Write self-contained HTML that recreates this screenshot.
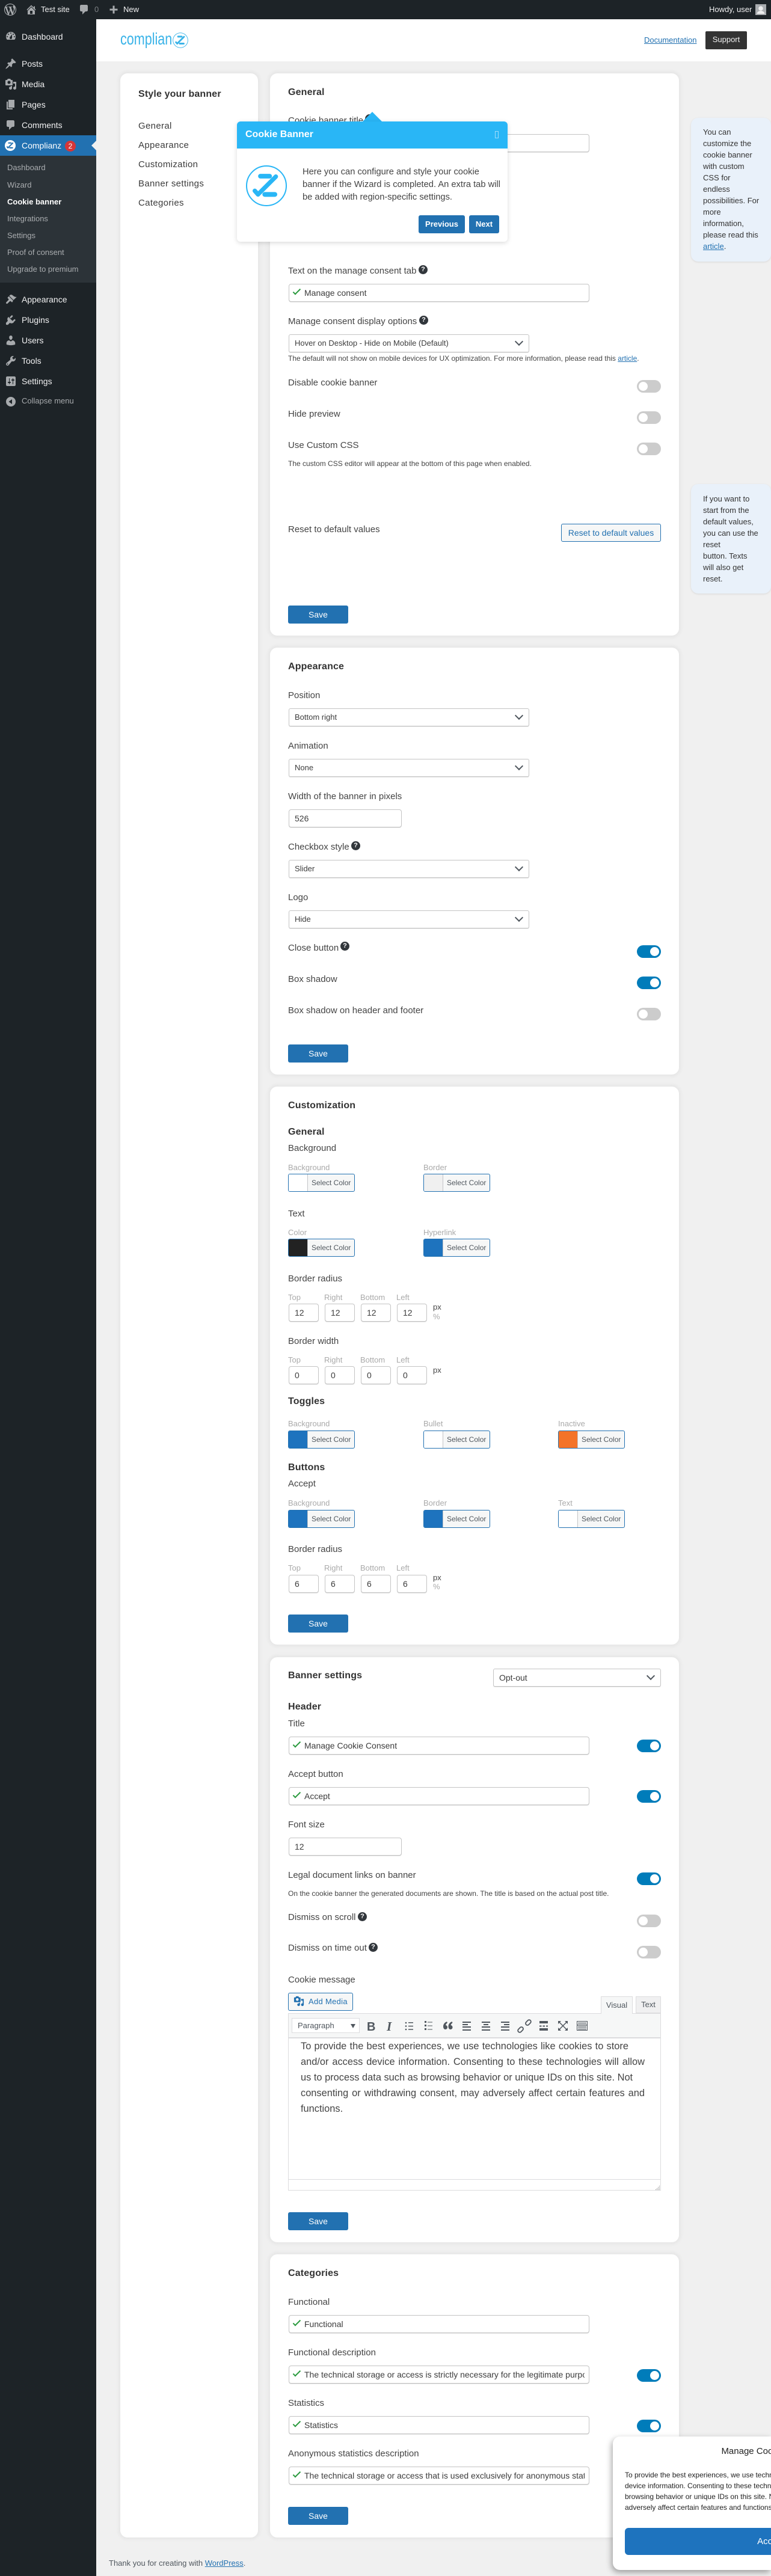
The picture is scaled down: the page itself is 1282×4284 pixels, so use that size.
<!DOCTYPE html>
<html lang="en"><head><meta charset="utf-8"><title>Cookie banner</title>
<style>
html,body{margin:0;padding:0;background:#f0f0f0}
body{position:relative;width:1282px;height:4284px;overflow:hidden;font-family:"Liberation Sans",sans-serif;color:#444}
a{color:#2271b1;text-decoration:underline}
.abs,.l,.s,.h,.c,.t,.sel,.n,.w,.tg,.cb,.save,.card,.m,.sm,.ic,.hp,.px{position:absolute}
#bar{position:absolute;left:0;top:0;width:1282px;height:32px;background:#1d2327}
#side{position:absolute;left:0;top:32px;width:160px;height:4252px;background:#1d2327}
#sub{position:absolute;left:0;top:259px;width:160px;height:211px;background:#2c3338}
#act{position:absolute;left:0;top:225px;width:160px;height:34px;background:#2271b1}
#head{position:absolute;left:160px;top:32px;width:1122px;height:70px;background:#fff}
.bt{position:absolute;font-size:13px;line-height:18px;color:#f0f0f1;top:7px;white-space:nowrap}
.m{left:36px;font-size:14px;line-height:18px;color:#f0f0f1;white-space:nowrap}
.sm{left:12px;font-size:13px;line-height:18px;color:#a9acaf;white-space:nowrap}
.ic{left:8px;width:20px;height:20px;fill:#a7aaad}
.card{background:#fff;border-radius:12px;box-shadow:0 0 5px 3px rgba(205,205,205,.28);left:449px;width:680px}
.l{left:479px;font-size:15px;line-height:18px;color:#444;white-space:nowrap}
.h{left:479px;margin-top:1px;font-size:16px;line-height:20px;font-weight:bold;color:#333;letter-spacing:.15px;white-space:nowrap}
.s{font-size:13px;line-height:16px;color:#aaa;white-space:nowrap}
.c{left:479px;font-size:12px;line-height:16px;color:#444;white-space:nowrap}
.t{left:480px;width:500px;height:30px;box-sizing:border-box;border:1px solid #c4c4c4;border-radius:4px;background:#fff;font-size:14px;line-height:28px;padding-left:25px;color:#3c3c3c;white-space:nowrap;box-shadow:0 1px 0 #e4e4e4}
.t:before{content:"";position:absolute;left:6px;top:8px;width:10.5px;height:4px;border-left:2px solid #2a9a3e;border-bottom:2px solid #2a9a3e;transform:rotate(-45deg)}
.t b{display:block;font-weight:normal;width:466px;overflow:hidden}
.sel{left:480px;width:400px;height:30px;box-sizing:border-box;border:1px solid #c4c4c4;border-radius:3px;background:#fff;font-size:13px;line-height:28px;padding-left:9px;color:#3c3c3c;box-shadow:0 1px 0 #e4e4e4}
.sel:after{content:"";position:absolute;right:11px;top:6px;width:8px;height:8px;border-right:2px solid #50575e;border-bottom:2px solid #50575e;transform:rotate(45deg)}
.w{left:480px;width:188px;height:30px;box-sizing:border-box;border:1px solid #c4c4c4;border-radius:4px;background:#fff;font-size:14px;line-height:28px;padding-left:9px;color:#3c3c3c;box-shadow:0 1px 0 #e4e4e4}
.n{width:50px;height:30px;box-sizing:border-box;border:1px solid #c4c4c4;border-radius:4px;background:#fff;font-size:14px;line-height:28px;padding-left:9px;color:#3c3c3c;box-shadow:0 1px 0 #e4e4e4}
.tg{left:1059px;width:40px;height:21px;border-radius:11px;background:#007cba}
.tg:after{content:"";position:absolute;right:3px;top:3px;width:15px;height:15px;border-radius:50%;background:#fff}
.tg.off{background:#ccc}
.tg.off:after{right:auto;left:3px}
.cb{width:111px;height:30px;box-sizing:border-box;border:1px solid #2271b1;border-radius:3px;background:#f6f7f7;overflow:hidden;font-size:12px;line-height:28px;color:#50575e;padding-left:38px;white-space:nowrap}
.cb i{position:absolute;left:0;top:0;bottom:0;width:31px;border-right:1px solid #c3c4c7}
.save{left:479px;width:100px;height:30px;background:#2271b1;border-radius:3px;color:#fff;font-size:14px;line-height:30px;text-align:center}
.hp{width:15px;height:15px;border-radius:50%;background:#32373c;color:#fff;font-size:11px;font-weight:bold;line-height:15px;text-align:center}
.px{font-size:13px;line-height:16px;color:#444;left:720px}
.note{position:absolute;left:1149px;width:133px;background:#e9f1fa;border-radius:12px;box-shadow:0 1px 3px rgba(0,0,0,.1);font-size:13px;line-height:19px;color:#333;box-sizing:border-box;padding-left:20px;white-space:nowrap}
.menu{position:absolute;left:229px;font-size:15px;line-height:18px;letter-spacing:.33px;color:#3c3c3c;white-space:nowrap}
.ed{position:absolute;left:500px;font-size:16.4px;line-height:26px;color:#444;white-space:nowrap;text-align:justify;text-align-last:justify}
</style></head><body>

<svg width="0" height="0" style="position:absolute"><defs>
<symbol id="wp" viewBox="0 0 20 20"><path d="M20 10c0-5.51-4.49-10-10-10C4.48 0 0 4.49 0 10c0 5.52 4.48 10 10 10 5.51 0 10-4.48 10-10zM7.78 15.37L4.37 6.22c.55-.02 1.17-.08 1.17-.08.5-.06.44-1.13-.06-1.11 0 0-1.45.11-2.37.11-.18 0-.37 0-.58-.01C4.12 2.69 6.87 1.11 10 1.11c2.33 0 4.45.87 6.05 2.34-.68-.11-1.65.39-1.65 1.58 0 .74.45 1.36.9 2.1.35.61.55 1.36.55 2.46 0 1.49-1.4 5-1.4 5l-3.03-8.37c.54-.02.82-.17.82-.17.5-.05.44-1.25-.06-1.22 0 0-1.44.12-2.38.12-.87 0-2.33-.12-2.33-.12-.5-.03-.56 1.2-.06 1.22l.92.08 1.26 3.41zM17.41 10c.24-.64.74-1.87.43-4.25.7 1.29 1.05 2.71 1.05 4.25 0 3.29-1.73 6.24-4.4 7.78.97-2.59 1.94-5.2 2.92-7.78zM6.1 18.09C3.12 16.65 1.11 13.53 1.11 10c0-1.3.23-2.48.72-3.59C3.25 10.3 4.67 14.2 6.1 18.09zm4.03-6.63l2.58 6.98c-.86.29-1.76.45-2.71.45-.79 0-1.57-.11-2.29-.33.81-2.38 1.62-4.74 2.42-7.1z"/></symbol>
<symbol id="home" viewBox="0 0 20 20"><path fill-rule="evenodd" d="M16 8.5l1.53 1.53-1.06 1.06L10 4.62l-6.47 6.47-1.06-1.06L10 2.5l4 4v-2h2v4zm-6-2.46l6 5.99V18H4v-5.97zM12 17v-5H8v5h4z"/></symbol>
<symbol id="dash" viewBox="0 0 20 20"><path fill-rule="evenodd" d="M3.76 16h12.48c1.1-1.37 1.76-3.11 1.76-5 0-4.42-3.58-8-8-8s-8 3.58-8 8c0 1.89.66 3.63 1.76 5zM10 4c.55 0 1 .45 1 1s-.45 1-1 1-1-.45-1-1 .45-1 1-1zM6 6c.55 0 1 .45 1 1s-.45 1-1 1-1-.45-1-1 .45-1 1-1zm8 0c.55 0 1 .45 1 1s-.45 1-1 1-1-.45-1-1 .45-1 1-1zm-5.37 5.55L12 7v6c0 1.1-.9 2-2 2s-2-.9-2-2c0-.57.24-1.08.63-1.45zM4 10c.55 0 1 .45 1 1s-.45 1-1 1-1-.45-1-1 .45-1 1-1zm12 0c.55 0 1 .45 1 1s-.45 1-1 1-1-.45-1-1 .45-1 1-1z"/></symbol>
<symbol id="post" viewBox="0 0 20 20"><path d="M10.44 3.02l1.82-1.82 6.36 6.35-1.83 1.82c-1.05-.68-2.48-.57-3.41.36l-.75.75c-.92.93-1.04 2.35-.35 3.41l-1.83 1.82-2.41-2.41-2.8 2.79c-.42.42-3.38 2.71-3.8 2.29s1.86-3.39 2.28-3.81l2.79-2.79L4.1 9.36l1.83-1.82c1.05.69 2.48.57 3.4-.36l.75-.75c.93-.92 1.05-2.35.36-3.41z"/></symbol>
<symbol id="media" viewBox="0 0 20 20"><path fill-rule="evenodd" d="M13 11V4c0-.55-.45-1-1-1h-1.67L9 1H5L3.67 3H2c-.55 0-1 .45-1 1v7c0 .55.45 1 1 1h10c.55 0 1-.45 1-1zM7 4.5c1.38 0 2.5 1.12 2.5 2.5S8.38 9.5 7 9.5 4.5 8.38 4.5 7 5.62 4.5 7 4.5zM14 6h5v10.5c0 1.38-1.12 2.5-2.5 2.5S14 17.88 14 16.5s1.12-2.5 2.5-2.5c.17 0 .34.02.5.05V9h-3V6zm-4 8.05V13h2v3.5c0 1.38-1.12 2.5-2.5 2.5S7 17.88 7 16.5 8.12 14 9.5 14c.17 0 .34.02.5.05z"/></symbol>
<symbol id="page" viewBox="0 0 20 20"><path d="M6 15V2h10v13H6zm-1 1h8v2H3V5h2v11z"/></symbol>
<symbol id="comm" viewBox="0 0 20 20"><path d="M5 2h9c1.1 0 2 .9 2 2v7c0 1.1-.9 2-2 2h-2l-5 5v-5H5c-1.1 0-2-.9-2-2V4c0-1.1.9-2 2-2z"/></symbol>
<symbol id="appr" viewBox="0 0 20 20"><path d="M14.48 11.06L7.41 3.99l1.5-1.5c.5-.56 2.3-.47 3.51.32 1.21.8 1.43 1.28 2.91 2.1 1.18.64 2.45 1.26 4.45.85zm-.71.71L6.7 4.7 4.93 6.47c-.39.39-.39 1.02 0 1.41l1.06 1.06c.59.59.59 1.54 0 2.12l-3.53 3.54c-.59.59-.59 1.54 0 2.12.59.59 1.54.59 2.12 0l3.54-3.53c.59-.59 1.53-.59 2.12 0l1.06 1.06c.39.39 1.02.39 1.41 0z"/></symbol>
<symbol id="plug" viewBox="0 0 20 20"><path d="M13.11 4.36L9.87 7.6 8 5.73l3.24-3.24c.35-.34 1.05-.2 1.56.32.52.51.67 1.21.31 1.55zm4.39 6.54l-3.24 3.24-1.87-1.87 3.24-3.24c.34-.35 1.04-.2 1.55.31.52.52.66 1.22.32 1.56zM5.11 6.13l.91-1.12 9.01 9.01-1.19.84c-1.71 1.14-3.73 1.07-5.47.07l-3.3 3.3-3-.2-.2-3 3.2-3.5c-1.1-1.7-1.1-3.9.04-5.4z"/></symbol>
<symbol id="user" viewBox="0 0 20 20"><path d="M10 9.25c-2.27 0-2.73-3.44-2.73-3.44C7 4.02 7.82 2 9.97 2c2.16 0 2.98 2.02 2.71 3.81 0 0-.41 3.44-2.68 3.44zm0 2.57L12.72 10c2.39 0 4.52 2.33 4.52 4.53v2.49s-3.65 1.13-7.24 1.13c-3.65 0-7.24-1.13-7.24-1.13v-2.49c0-2.25 1.94-4.48 4.47-4.48z"/></symbol>
<symbol id="tool" viewBox="0 0 20 20"><path fill-rule="evenodd" d="M16.68 9.77c-1.34 1.34-3.3 1.67-4.95.99l-5.41 6.52c-.99.99-2.59.99-3.58 0s-.99-2.59 0-3.57l6.52-5.42c-.68-1.65-.35-3.61.99-4.95 1.28-1.28 3.12-1.62 4.72-1.06l-2.89 2.89 2.82 2.82 2.86-2.87c.53 1.58.18 3.39-1.08 4.65zM3.81 16.21c.4.39 1.04.39 1.43 0 .4-.4.4-1.04 0-1.43-.39-.4-1.03-.4-1.43 0-.39.39-.39 1.03 0 1.43z"/></symbol>
<symbol id="sett" viewBox="0 0 20 20"><path fill-rule="evenodd" d="M18 16V4c0-1.1-.9-2-2-2H4c-1.1 0-2 .9-2 2v12c0 1.1.9 2 2 2h12c1.1 0 2-.9 2-2zM8 11h1c.55 0 1 .45 1 1s-.45 1-1 1H8v1.5c0 .28-.22.5-.5.5s-.5-.22-.5-.5V13H6c-.55 0-1-.45-1-1s.45-1 1-1h1V5.5c0-.28.22-.5.5-.5s.5.22.5.5V11zm5-2h-1c-.55 0-1-.45-1-1s.45-1 1-1h1V5.5c0-.28.22-.5.5-.5s.5.22.5.5V7h1c.55 0 1 .45 1 1s-.45 1-1 1h-1v5.5c0 .28-.22.5-.5.5s-.5-.22-.5-.5V9z"/></symbol>
<symbol id="coll" viewBox="0 0 20 20"><path fill-rule="evenodd" d="M10 2a8 8 0 1 0 0 16 8 8 0 0 0 0-16zm2 4v8L6.5 10z"/></symbol>
<symbol id="zz" viewBox="0 0 204 204"><g fill="none" stroke-linecap="round"><line x1="72" y1="54" x2="118" y2="54" stroke-width="23"/><line x1="149" y1="56" x2="60" y2="145" stroke-width="22"/><line x1="60" y1="145" x2="44" y2="127" stroke-width="22"/><line x1="94" y1="145" x2="144" y2="145" stroke-width="24"/></g></symbol>
</defs></svg>

<div id="bar">
<svg class="abs" style="left:7px;top:6px;fill:#a7aaad" width="20" height="20"><use href="#wp"/></svg>
<svg class="abs" style="left:42px;top:6px;fill:#a7aaad" width="20" height="20"><use href="#home"/></svg>
<div class="bt" style="left:68px">Test site</div>
<svg class="abs" style="left:130px;top:6px;fill:#a7aaad" width="20" height="20"><use href="#comm"/></svg>
<div class="bt" style="left:157px;color:#7d8185">0</div>
<svg class="abs" style="left:179px;top:6px" width="20" height="20"><path fill="#a7aaad" d="M8.5 3.5h3v5h5v3h-5v5h-3v-5h-5v-3h5z"/></svg>
<div class="bt" style="left:205px">New</div>
<div class="bt" style="left:1179px">Howdy, user</div>
<svg class="abs" style="left:1256px;top:7px" width="18" height="18"><rect width="18" height="18" fill="#a9acaf"/><circle cx="9" cy="7" r="3.8" fill="#eee"/><path d="M2.5 16c.5-3.5 3.5-5 6.5-5s6 1.500 6.500 5z" fill="#eee"/></svg>
</div>

<div id="side"></div>
<div id="act"></div>
<div id="sub"></div>
<svg class="ic" style="top:50px"><use href="#dash"/></svg><div class="m" style="top:52px">Dashboard</div>
<svg class="ic" style="top:96px"><use href="#post"/></svg><div class="m" style="top:97px">Posts</div>
<svg class="ic" style="top:130px"><use href="#media"/></svg><div class="m" style="top:131px">Media</div>
<svg class="ic" style="top:164px"><use href="#page"/></svg><div class="m" style="top:165px">Pages</div>
<svg class="ic" style="top:198px"><use href="#comm"/></svg><div class="m" style="top:199px">Comments</div>
<svg class="abs" style="left:8px;top:233px" width="18" height="18" viewBox="0 0 204 204"><circle cx="102" cy="102" r="102" fill="#fff"/><use href="#zz" width="204" height="204" stroke="#2271b1"/></svg>
<div class="m" style="top:233px;color:#fff">Complianz</div>
<div class="abs" style="left:108px;top:234px;width:18px;height:18px;border-radius:50%;background:#d63638;color:#fff;font-size:12px;line-height:18px;text-align:center">2</div>
<div class="abs" style="left:152px;top:234px;width:0;height:0;border:8px solid transparent;border-right-color:#f0f0f0;border-left:0"></div>
<div class="sm" style="top:270px">Dashboard</div>
<div class="sm" style="top:299px">Wizard</div>
<div class="sm" style="top:327px;color:#fff;font-weight:bold">Cookie banner</div>
<div class="sm" style="top:355px">Integrations</div>
<div class="sm" style="top:383px">Settings</div>
<div class="sm" style="top:411px">Proof of consent</div>
<div class="sm" style="top:439px">Upgrade to premium</div>
<svg class="ic" style="top:488px"><use href="#appr"/></svg><div class="m" style="top:489px">Appearance</div>
<svg class="ic" style="top:522px"><use href="#plug"/></svg><div class="m" style="top:523px">Plugins</div>
<svg class="ic" style="top:556px"><use href="#user"/></svg><div class="m" style="top:557px">Users</div>
<svg class="ic" style="top:590px"><use href="#tool"/></svg><div class="m" style="top:591px">Tools</div>
<svg class="ic" style="top:624px"><use href="#sett"/></svg><div class="m" style="top:625px">Settings</div>
<svg class="ic" style="top:658px"><use href="#coll"/></svg><div class="m" style="top:658px;font-size:13px;color:#a7aaad">Collapse menu</div>

<div id="head"></div>
<div class="abs" style="left:200px;top:48px;font-size:28px;line-height:34px;color:#39b3e8;transform:scaleX(.77);transform-origin:0 0;white-space:nowrap">complian</div>
<svg class="abs" style="left:287px;top:54px" width="26" height="26" viewBox="0 0 204 204"><circle cx="102" cy="102" r="97" fill="#fff" stroke="#39b3e8" stroke-width="7"/><use href="#zz" width="204" height="204" stroke="#39b3e8"/></svg>
<a class="abs" style="left:1071px;top:58px;font-size:13px;line-height:18px">Documentation</a>
<div class="abs" style="left:1173px;top:52px;width:69px;height:30px;background:#333;border-radius:2px;color:#eee;font-size:13px;line-height:28px;text-align:center">Support</div>

<div class="card" style="left:200px;width:229px;top:122px;height:4098px"></div>
<div class="abs" style="left:230px;top:147px;font-size:16px;line-height:20px;font-weight:bold;color:#333;letter-spacing:.15px">Style your banner</div>
<div class="menu" style="top:201px;left:230px">General</div>
<div class="menu" style="top:233px;left:230px">Appearance</div>
<div class="menu" style="top:265px;left:230px">Customization</div>
<div class="menu" style="top:297px;left:230px">Banner settings</div>
<div class="menu" style="top:329px;left:230px">Categories</div>

<!-- General -->
<div class="card" style="top:122px;height:935px"></div>
<div class="h" style="top:143px">General</div>
<div class="l" style="top:192px">Cookie banner title</div>
<div class="hp" style="left:607px;top:190px">?</div>
<div class="t" style="top:223px"></div>
<div class="l" style="top:442px">Text on the manage consent tab</div>
<div class="hp" style="left:696px;top:441px">?</div>
<div class="t" style="top:472px">Manage consent</div>
<div class="l" style="top:526px">Manage consent display options</div>
<div class="hp" style="left:697px;top:525px">?</div>
<div class="sel" style="top:556px">Hover on Desktop - Hide on Mobile (Default)</div>
<div class="c" style="top:588px">The default will not show on mobile devices for UX optimization. For more information, please read this <a>article</a>.</div>
<div class="l" style="top:628px">Disable cookie banner</div>
<div class="tg off" style="top:632px"></div>
<div class="l" style="top:680px">Hide preview</div>
<div class="tg off" style="top:684px"></div>
<div class="l" style="top:732px">Use Custom CSS</div>
<div class="tg off" style="top:736px"></div>
<div class="c" style="top:763px">The custom CSS editor will appear at the bottom of this page when enabled.</div>
<div class="l" style="top:872px">Reset to default values</div>
<div class="abs" style="left:933px;top:871px;width:166px;height:30px;box-sizing:border-box;border:1px solid #2271b1;border-radius:3px;background:#f6f7f7;color:#2271b1;font-size:14px;line-height:28px;text-align:center">Reset to default values</div>
<div class="save" style="top:1007px">Save</div>

<div class="note" style="top:196px;height:239px;padding-top:14px">You can<br>customize the<br>cookie banner<br>with custom<br>CSS for<br>endless<br>possibilities. For<br>more<br>information,<br>please read this<br><a>article</a>.</div>
<div class="note" style="top:805px;height:182px;padding-top:15px">If you want to<br>start from the<br>default values,<br>you can use the<br>reset<br>button. Texts<br>will also get<br>reset.</div>

<!-- Appearance -->
<div class="card" style="top:1077px;height:710px"></div>
<div class="h" style="top:1098px">Appearance</div>
<div class="l" style="top:1148px">Position</div>
<div class="sel" style="top:1178px">Bottom right</div>
<div class="l" style="top:1232px">Animation</div>
<div class="sel" style="top:1262px">None</div>
<div class="l" style="top:1316px">Width of the banner in pixels</div>
<div class="w" style="top:1346px">526</div>
<div class="l" style="top:1400px">Checkbox style</div>
<div class="hp" style="left:584px;top:1399px">?</div>
<div class="sel" style="top:1430px">Slider</div>
<div class="l" style="top:1484px">Logo</div>
<div class="sel" style="top:1514px">Hide</div>
<div class="l" style="top:1568px">Close button</div>
<div class="hp" style="left:566px;top:1566px">?</div>
<div class="tg" style="top:1572px"></div>
<div class="l" style="top:1620px">Box shadow</div>
<div class="tg" style="top:1624px"></div>
<div class="l" style="top:1672px">Box shadow on header and footer</div>
<div class="tg off" style="top:1676px"></div>
<div class="save" style="top:1737px">Save</div>

<!-- Customization -->
<div class="card" style="top:1807px;height:928px"></div>
<div class="h" style="top:1828px">Customization</div>
<div class="h" style="top:1872px">General</div>
<div class="l" style="top:1901px">Background</div>
<div class="s" style="left:479px;top:1934px">Background</div><div class="s" style="left:704px;top:1934px">Border</div>
<div class="cb" style="left:479px;top:1952px"><i style="background:#fff"></i>Select Color</div>
<div class="cb" style="left:704px;top:1952px"><i style="background:#f0f0f0"></i>Select Color</div>
<div class="l" style="top:2010px">Text</div>
<div class="s" style="left:479px;top:2042px">Color</div><div class="s" style="left:704px;top:2042px">Hyperlink</div>
<div class="cb" style="left:479px;top:2060px"><i style="background:#222"></i>Select Color</div>
<div class="cb" style="left:704px;top:2060px"><i style="background:#1e73be"></i>Select Color</div>
<div class="l" style="top:2118px">Border radius</div>
<div class="s" style="left:479px;top:2150px">Top</div><div class="s" style="left:539px;top:2150px">Right</div><div class="s" style="left:599px;top:2150px">Bottom</div><div class="s" style="left:659px;top:2150px">Left</div>
<div class="n" style="left:480px;top:2168px">12</div><div class="n" style="left:540px;top:2168px">12</div><div class="n" style="left:600px;top:2168px">12</div><div class="n" style="left:660px;top:2168px">12</div>
<div class="px" style="top:2166px">px</div><div class="px" style="top:2182px;color:#aaa">%</div>
<div class="l" style="top:2222px">Border width</div>
<div class="s" style="left:479px;top:2254px">Top</div><div class="s" style="left:539px;top:2254px">Right</div><div class="s" style="left:599px;top:2254px">Bottom</div><div class="s" style="left:659px;top:2254px">Left</div>
<div class="n" style="left:480px;top:2272px">0</div><div class="n" style="left:540px;top:2272px">0</div><div class="n" style="left:600px;top:2272px">0</div><div class="n" style="left:660px;top:2272px">0</div>
<div class="px" style="top:2271px">px</div>
<div class="h" style="top:2320px">Toggles</div>
<div class="s" style="left:479px;top:2360px">Background</div><div class="s" style="left:704px;top:2360px">Bullet</div><div class="s" style="left:928px;top:2360px">Inactive</div>
<div class="cb" style="left:479px;top:2379px"><i style="background:#1e73be"></i>Select Color</div>
<div class="cb" style="left:704px;top:2379px"><i style="background:#fff"></i>Select Color</div>
<div class="cb" style="left:928px;top:2379px"><i style="background:#f47328"></i>Select Color</div>
<div class="h" style="top:2430px">Buttons</div>
<div class="l" style="top:2459px">Accept</div>
<div class="s" style="left:479px;top:2492px">Background</div><div class="s" style="left:704px;top:2492px">Border</div><div class="s" style="left:928px;top:2492px">Text</div>
<div class="cb" style="left:479px;top:2511px"><i style="background:#1e73be"></i>Select Color</div>
<div class="cb" style="left:704px;top:2511px"><i style="background:#1e73be"></i>Select Color</div>
<div class="cb" style="left:928px;top:2511px"><i style="background:#fff"></i>Select Color</div>
<div class="l" style="top:2568px">Border radius</div>
<div class="s" style="left:479px;top:2600px">Top</div><div class="s" style="left:539px;top:2600px">Right</div><div class="s" style="left:599px;top:2600px">Bottom</div><div class="s" style="left:659px;top:2600px">Left</div>
<div class="n" style="left:480px;top:2619px">6</div><div class="n" style="left:540px;top:2619px">6</div><div class="n" style="left:600px;top:2619px">6</div><div class="n" style="left:660px;top:2619px">6</div>
<div class="px" style="top:2616px">px</div><div class="px" style="top:2631px;color:#aaa">%</div>
<div class="save" style="top:2685px">Save</div>

<!-- Banner settings -->
<div class="card" style="top:2756px;height:973px"></div>
<div class="h" style="top:2776px">Banner settings</div>
<div class="sel" style="left:820px;top:2775px;width:279px;font-size:14px">Opt-out</div>
<div class="h" style="top:2828px">Header</div>
<div class="l" style="top:2858px">Title</div>
<div class="t" style="top:2888px">Manage Cookie Consent</div>
<div class="tg" style="top:2893px"></div>
<div class="l" style="top:2942px">Accept button</div>
<div class="t" style="top:2972px">Accept</div>
<div class="tg" style="top:2977px"></div>
<div class="l" style="top:3026px">Font size</div>
<div class="w" style="top:3056px">12</div>
<div class="l" style="top:3110px">Legal document links on banner</div>
<div class="tg" style="top:3114px"></div>
<div class="c" style="top:3141px">On the cookie banner the generated documents are shown. The title is based on the actual post title.</div>
<div class="l" style="top:3180px">Dismiss on scroll</div>
<div class="hp" style="left:595px;top:3180px">?</div>
<div class="tg off" style="top:3184px"></div>
<div class="l" style="top:3231px">Dismiss on time out</div>
<div class="hp" style="left:613px;top:3231px">?</div>
<div class="tg off" style="top:3236px"></div>
<div class="l" style="top:3284px">Cookie message</div>
<div class="abs" style="left:479px;top:3314px;width:108px;height:30px;box-sizing:border-box;border:1px solid #2271b1;border-radius:3px;background:#f6f7f7;color:#2271b1;font-size:13px;line-height:28px;padding-left:33px;white-space:nowrap;letter-spacing:.3px">Add Media</div>
<svg class="abs" style="left:488px;top:3319px;fill:#2271b1" width="18" height="18"><use href="#media"/></svg>
<div class="abs" style="left:999px;top:3320px;width:53px;height:29px;box-sizing:border-box;background:#f6f7f7;border:1px solid #dcdcde;border-bottom:0;font-size:13px;line-height:28px;text-align:center;color:#50575e;z-index:2">Visual</div>
<div class="abs" style="left:1057px;top:3320px;width:42px;height:28px;box-sizing:border-box;background:#f0f0f1;border:1px solid #dcdcde;font-size:13px;line-height:26px;text-align:center;color:#50575e">Text</div>
<div class="abs" style="left:479px;top:3348px;width:620px;height:295px;box-sizing:border-box;border:1px solid #dcdcde;background:#fff"></div>
<div class="abs" style="left:480px;top:3349px;width:618px;height:41px;box-sizing:border-box;background:#f6f7f7;border-bottom:2px solid #dcdcde"></div>
<div class="abs" style="left:480px;top:3624px;width:618px;height:1px;background:#dcdcde"></div>
<div class="abs" style="left:485px;top:3356px;width:113px;height:25px;box-sizing:border-box;background:#fff;border:1px solid #dcdcde;font-size:13px;line-height:23px;padding-left:9px;color:#50575e">Paragraph</div>
<svg class="abs" style="left:0;top:0;z-index:3" width="1282" height="4284" viewBox="0 0 1282 4284" fill="#50575e">
<path d="M583 3366h8l-4 7z"/>
<text x="610" y="3377" font-family="Liberation Sans" font-weight="bold" font-size="20">B</text>
<text x="643" y="3377" font-family="Liberation Serif" font-style="italic" font-weight="bold" font-size="21">I</text>
<g><circle cx="675" cy="3364" r="1.300"/><circle cx="675" cy="3369.500" r="1.300"/><circle cx="675" cy="3375" r="1.300"/><rect x="679" y="3363" width="8" height="1.500"/><rect x="679" y="3368.800" width="8" height="1.500"/><rect x="679" y="3374.300" width="8" height="1.500"/></g>
<g><rect x="706" y="3361" width="3" height="3"/><rect x="706" y="3367" width="3" height="3"/><rect x="706" y="3373" width="3" height="3"/><rect x="711" y="3362.500" width="8" height="1"/><rect x="711" y="3368.500" width="8" height="1"/><rect x="711" y="3374.500" width="8" height="1"/></g>
<path d="M743 3362c-3 1-6 4-6 8 0 3 1.500 5 3.500 5s3.500-1.500 3.500-3.500-1.500-3.500-3-3.500c.3-1.500 1.500-3 3-4zM751.500 3362c-3 1-6 4-6 8 0 3 1.500 5 3.500 5s3.500-1.500 3.500-3.500-1.500-3.500-3-3.500c.3-1.500 1.500-3 3-4z"/>
<g><rect x="769" y="3362" width="14" height="2"/><rect x="769" y="3366" width="9" height="2"/><rect x="769" y="3370" width="14" height="2"/><rect x="769" y="3375" width="14" height="2"/></g>
<g><rect x="801" y="3362" width="14" height="2"/><rect x="804" y="3366" width="8" height="2"/><rect x="801" y="3370" width="14" height="2"/><rect x="801" y="3375" width="14" height="2"/></g>
<g><rect x="833" y="3362" width="14" height="2"/><rect x="838" y="3366" width="9" height="2"/><rect x="833" y="3370" width="14" height="2"/><rect x="833" y="3375" width="14" height="2"/></g>
<g fill="none" stroke="#50575e" stroke-width="1.800"><rect x="-7" y="-3" width="10" height="6" rx="3" transform="translate(867 3374) rotate(-45)"/><rect x="-3" y="-3" width="10" height="6" rx="3" transform="translate(877 3365) rotate(-45)"/></g>
<g><rect x="897" y="3361" width="14" height="4"/><rect x="897" y="3368.500" width="3.500" height="2"/><rect x="902.500" y="3368.500" width="3.500" height="2"/><rect x="908" y="3368.500" width="3" height="2"/><rect x="897" y="3373" width="14" height="4"/></g>
<g><path d="M928 3361h5l-5 5zM944 3361v5l-5-5zM928 3377v-5l5 5zM944 3377h-5l5-5z"/><path d="M930 3363l12 12M942 3363l-12 12" stroke="#50575e" stroke-width="1.500"/></g>
<g><rect x="959.500" y="3361.500" width="17" height="15" fill="none" stroke="#50575e"/><rect x="959" y="3367" width="18" height="1.500"/><rect x="961" y="3363.500" width="14" height="2" opacity=".7"/><rect x="961" y="3370" width="14" height="2" opacity=".7"/><rect x="961" y="3373.500" width="14" height="2" opacity=".7"/></g>
<g fill="#888"><rect x="1096" y="3641" width="1" height="1"/><rect x="1094" y="3641" width="1" height="1"/><rect x="1092" y="3641" width="1" height="1"/><rect x="1090" y="3641" width="1" height="1"/><rect x="1096" y="3639" width="1" height="1"/><rect x="1094" y="3639" width="1" height="1"/><rect x="1092" y="3639" width="1" height="1"/><rect x="1096" y="3637" width="1" height="1"/><rect x="1094" y="3637" width="1" height="1"/><rect x="1096" y="3635" width="1" height="1"/></g>
</svg>
<div class="ed" style="top:3390px;width:545px">To provide the best experiences, we use technologies like cookies to store</div>
<div class="ed" style="top:3416px;width:572px">and/or access device information. Consenting to these technologies will allow</div>
<div class="ed" style="top:3442px;width:551px">us to process data such as browsing behavior or unique IDs on this site. Not</div>
<div class="ed" style="top:3468px;width:572px">consenting or withdrawing consent, may adversely affect certain features and</div>
<div class="ed" style="top:3494px;width:73px">functions.</div>
<div class="save" style="top:3679px">Save</div>

<!-- Categories -->
<div class="card" style="top:3749px;height:471px"></div>
<div class="h" style="top:3770px">Categories</div>
<div class="l" style="top:3820px">Functional</div>
<div class="t" style="top:3850px"><b>Functional</b></div>
<div class="l" style="top:3904px">Functional description</div>
<div class="t" style="top:3934px"><b>The technical storage or access is strictly necessary for the legitimate purpose of enabling the use</b></div>
<div class="tg" style="top:3940px"></div>
<div class="l" style="top:3988px">Statistics</div>
<div class="t" style="top:4018px"><b>Statistics</b></div>
<div class="tg" style="top:4024px"></div>
<div class="l" style="top:4072px">Anonymous statistics description</div>
<div class="t" style="top:4102px"><b>The technical storage or access that is used exclusively for anonymous statistical purposes.</b></div>
<div class="save" style="top:4169px">Save</div>

<div class="abs" style="left:181px;top:4254px;font-size:13px;line-height:18px;color:#50575e;white-space:nowrap">Thank you for creating with <a>WordPress</a>.</div>

<!-- Cookie banner -->
<div class="abs" style="left:1019px;top:4052px;width:263px;height:222px;background:#fff;border-radius:12px 0 0 12px;box-shadow:-2px 4px 10px rgba(0,0,0,.35);z-index:5;overflow:hidden">
<div class="abs" style="left:0;width:526px;top:16px;text-align:center;font-size:15px;line-height:18px;color:#222">Manage Cookie Consent</div>
<div class="abs" style="left:20px;top:55px;font-size:12px;line-height:18px;color:#222;white-space:nowrap">To provide the best experiences, we use technologies like cookies to store and/or access<br>device information. Consenting to these technologies will allow us to process data such as<br>browsing behavior or unique IDs on this site. Not consenting or withdrawing consent, may<br>adversely affect certain features and functions.</div>
<div class="abs" style="left:20px;top:152px;width:486px;height:45px;background:#1e73be;border-radius:6px;color:#fff;font-size:15px;line-height:45px;text-align:center">Accept</div>
</div>

<!-- Tour popup -->
<div class="abs" style="left:603px;top:186px;width:0;height:0;border-left:16px solid transparent;border-right:16px solid transparent;border-bottom:16px solid #29b6f6;z-index:9"></div>
<div class="abs" style="left:394px;top:202px;width:450px;height:200px;background:#fff;border-radius:6px;box-shadow:0 2px 8px rgba(0,0,0,.15);z-index:9">
<div class="abs" style="left:0;top:0;width:450px;height:45px;background:#29b6f6;border-radius:6px 6px 0 0"></div>
<div class="abs" style="left:14px;top:11px;font-size:16px;line-height:22px;font-weight:bold;color:#fff;white-space:nowrap">Cookie Banner</div>
<div class="abs" style="left:429px;top:16px;width:4px;height:10px;border:1px solid #9fdcfb"></div>
<svg class="abs" style="left:15px;top:73px" width="68" height="68" viewBox="0 0 204 204"><circle cx="102" cy="102" r="99" fill="#fff" stroke="#29b6f6" stroke-width="6"/><use href="#zz" width="204" height="204" stroke="#29b6f6"/></svg>
<div class="abs" style="left:109px;top:74px;font-size:14.7px;line-height:21px;color:#444;white-space:nowrap">Here you can configure and style your cookie<br>banner if the Wizard is completed. An extra tab will<br>be added with region-specific settings.</div>
<div class="abs" style="left:302px;top:156px;width:77px;height:30px;background:#2271b1;border-radius:3px;color:#fff;font-size:13px;font-weight:bold;line-height:30px;text-align:center">Previous</div>
<div class="abs" style="left:386px;top:156px;width:50px;height:30px;background:#2271b1;border-radius:3px;color:#fff;font-size:13px;font-weight:bold;line-height:30px;text-align:center">Next</div>
</div>
</body></html>
